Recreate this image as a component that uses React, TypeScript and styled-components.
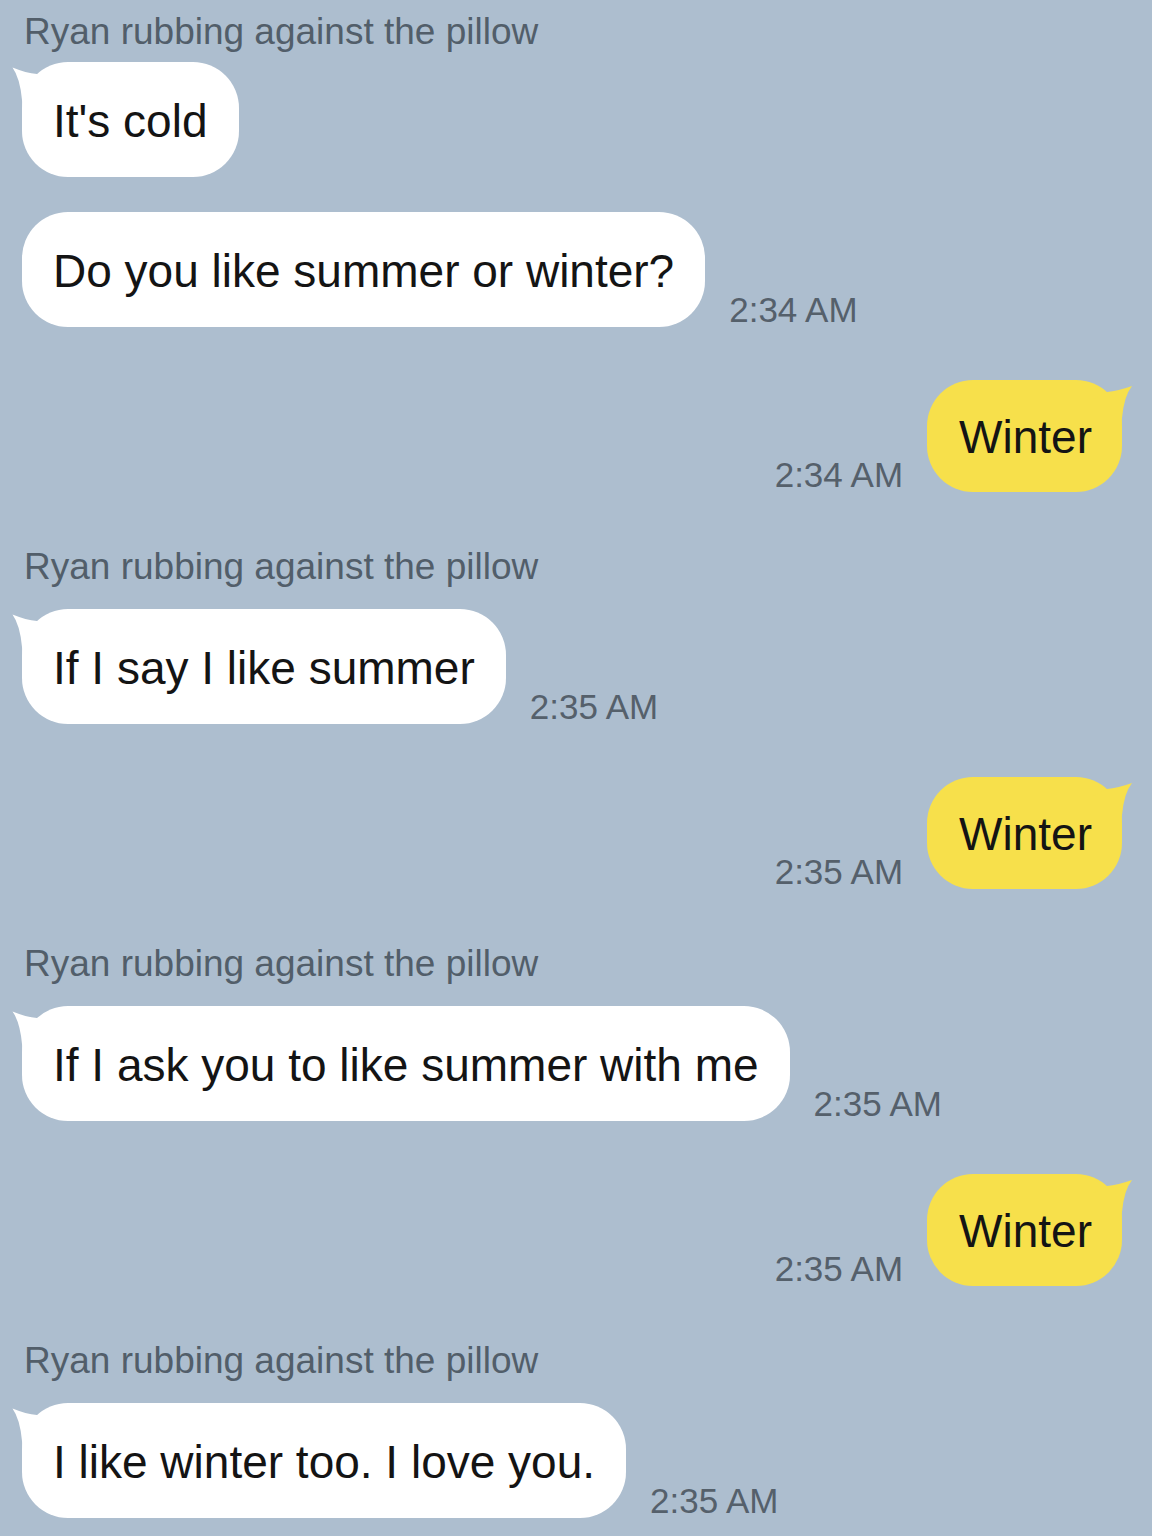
import React from 'react';
import styled, { createGlobalStyle } from 'styled-components';

const GlobalStyle = createGlobalStyle`
	html, body {
		margin: 0;
		padding: 0;
		background: #adbecf;
	}
	body {
		font-family: 'Liberation Sans', Arial, sans-serif;
	}
`;

type Msg =
	| { kind: 'in'; name: string; lines: { text: string; time?: string }[] }
	| { kind: 'out'; text: string; time: string };

const messages: Msg[] = [
	{
		kind: 'in',
		name: 'Ryan rubbing against the pillow',
		lines: [{ text: "It's cold" }, { text: 'Do you like summer or winter?', time: '2:34 AM' }],
	},
	{ kind: 'out', text: 'Winter', time: '2:34 AM' },
	{
		kind: 'in',
		name: 'Ryan rubbing against the pillow',
		lines: [{ text: 'If I say I like summer', time: '2:35 AM' }],
	},
	{ kind: 'out', text: 'Winter', time: '2:35 AM' },
	{
		kind: 'in',
		name: 'Ryan rubbing against the pillow',
		lines: [{ text: 'If I ask you to like summer with me', time: '2:35 AM' }],
	},
	{ kind: 'out', text: 'Winter', time: '2:35 AM' },
	{
		kind: 'in',
		name: 'Ryan rubbing against the pillow',
		lines: [{ text: 'I like winter too. I love you.', time: '2:35 AM' }],
	},
];

// the little horn on the top corner of the first bubble
const Tail = ({ side }: { side: 'left' | 'right' }) =>
	side === 'left' ? (
		<TailSvg side={side} width="40" height="50" viewBox="-10 0 40 50">
			<path d="M -9.5 5.5 Q 4 11 15 12 L 30 20 L 30 50 L 1 50 L 0 38 Q -2 16 -9.5 5.5 Z" fill="#ffffff" />
		</TailSvg>
	) : (
		<TailSvg side={side} width="42" height="50" viewBox="-30 0 42 50">
			<path d="M 10 6 Q -4 11 -15 12 L -30 20 L -30 50 L -1 50 L 0 38 Q 2 16 10 6 Z" fill="#f7e04b" />
		</TailSvg>
	);

const App: React.FC = () => {
	return (
		<Chat>
			<GlobalStyle />
			{messages.map((m, i) => {
				if (m.kind === 'out') {
					return (
						<OutRow key={i}>
							<Time>{m.time}</Time>
							<Bubble mine>
								<Tail side="right" />
								{m.text}
							</Bubble>
						</OutRow>
					);
				}
				return (
					<InGroup key={i} first={i === 0}>
						<Name first={i === 0}>{m.name}</Name>
						{m.lines.map((l, j) => (
							<InRow key={j}>
								<Bubble>
									{j === 0 && <Tail side="left" />}
									{l.text}
								</Bubble>
								{l.time && <Time>{l.time}</Time>}
							</InRow>
						))}
					</InGroup>
				);
			})}
		</Chat>
	);
};

const Chat = styled.div`
	width: 1152px;
	height: 1536px;
	box-sizing: border-box;
	padding: 0 30px 0 22px;
	display: flex;
	flex-direction: column;
	overflow: hidden;
`;

const InGroup = styled.div<{ first?: boolean }>`
	display: flex;
	flex-direction: column;
	gap: 35px;
	margin-top: ${(p) => (p.first ? '11px' : '54px')};
`;

const Name = styled.div<{ first?: boolean }>`
	font-size: 37px;
	line-height: 42px;
	height: 42px;
	color: #525e6a;
	margin: 0 0 ${(p) => (p.first ? '-26px' : '-14px')} 2px;
	white-space: nowrap;
`;

const InRow = styled.div`
	display: flex;
	align-items: flex-end;
	gap: 24px;
`;

const OutRow = styled.div`
	display: flex;
	align-items: flex-end;
	justify-content: flex-end;
	gap: 24px;
	margin-top: 53px;
`;

const Bubble = styled.div<{ mine?: boolean }>`
	position: relative;
	background: ${(p) => (p.mine ? '#f7e04b' : '#ffffff')};
	color: #141414;
	font-size: 46px;
	line-height: 53px;
	padding: ${(p) => (p.mine ? '31px 30px 28px 32px' : '33px 31px 29px 31px')};
	border-radius: 46px;
	white-space: nowrap;
`;

const TailSvg = styled.svg<{ side: 'left' | 'right' }>`
	position: absolute;
	top: 0;
	${(p) => (p.side === 'left' ? 'left: -10px;' : 'right: -12px;')}
	overflow: visible;
`;

const Time = styled.div`
	font-size: 35px;
	line-height: 34px;
	color: #55606b;
	white-space: nowrap;
`;

export default App;
